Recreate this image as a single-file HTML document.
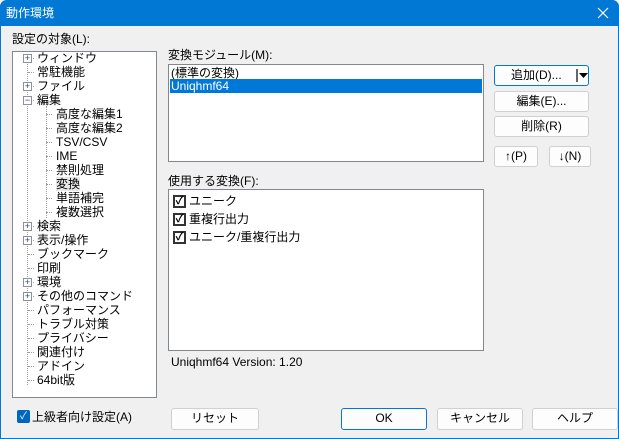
<!DOCTYPE html>
<html><head><meta charset="utf-8"><style>
*{margin:0;padding:0;box-sizing:border-box}
body{width:619px;height:439px;background:#f0f0f0;font-family:"Liberation Sans","Noto Sans CJK JP",sans-serif;font-size:12px;color:#000;position:relative;overflow:hidden}
.win{position:absolute;left:0;top:0;width:619px;height:439px;border:1px solid #0078d4;border-radius:7px 7px 0 0}
.title{position:absolute;left:0;top:0;width:619px;height:26px;background:#0078d4;color:#fff;font-size:12px;border-radius:7px 7px 0 0}
.a{position:absolute;white-space:nowrap;line-height:14px}
.box{position:absolute;background:#fff;border:1px solid #828790}
.btn{position:absolute;background:#fdfdfd;border:1px solid #d0d0d0;border-radius:3px;text-align:center;line-height:19px}
.exp{position:absolute;width:9px;height:9px;border:1px solid #919191;background:#fff;font-size:9px;line-height:7px;text-align:center;color:#1c3f94}
.dot{position:absolute;border-top:1px dotted #a0a0a0;width:6px;height:0}
.cb{position:absolute;width:13px;height:13px;border:2px solid #333;background:#fff;font-size:11px;line-height:9px;text-align:center;font-weight:bold}
</style></head><body>
<div class="win"></div>
<div class="title"><span class="a" style="left:6px;top:6px">動作環境</span><svg style="position:absolute;left:597px;top:7px" width="12" height="12"><path d="M1 1L11 11M11 1L1 11" stroke="#fff" stroke-width="1.2"/></svg></div>
<span class="a" style="left:12px;top:32px">設定の対象(L):</span>
<div class="box" style="left:12px;top:51px;width:145px;height:347px">
<div style="position:absolute;left:14px;top:6px;height:327px;border-left:1px dotted #a0a0a0"></div>
<div style="position:absolute;left:33px;top:54px;height:112px;border-left:1px dotted #a0a0a0"></div>
</div>
<div id="tree"></div>
<span class="a" style="left:168px;top:48px">変換モジュール(M):</span>
<div class="box" style="left:168px;top:64px;width:316px;height:98px">
<div class="a" style="left:2px;top:1px">(標準の変換)</div>
<div class="a" style="left:1px;top:14px;width:312px;height:14px;background:#0078d7;color:#fff;padding-left:1px">Uniqhmf64</div>
</div>
<span class="a" style="left:168px;top:174px">使用する変換(F):</span>
<div class="box" style="left:168px;top:189px;width:316px;height:162px">
<div class="cb" style="left:4px;top:5px">✓</div><span class="a" style="left:20px;top:4px">ユニーク</span>
<div class="cb" style="left:4px;top:23px">✓</div><span class="a" style="left:20px;top:22px">重複行出力</span>
<div class="cb" style="left:4px;top:41px">✓</div><span class="a" style="left:20px;top:40px">ユニーク/重複行出力</span>
</div>
<div class="btn" style="left:494px;top:65px;width:95px;height:21px;border-color:#0078d4;text-align:left;padding-left:16px">追加(D)...<span style="position:absolute;left:81px;top:3px;width:2px;height:13px;background:#666"></span><svg style="position:absolute;left:84px;top:7px" width="9" height="6"><path d="M0 0H9L4.5 5Z" fill="#000"/></svg></div>
<div class="btn" style="left:494px;top:91px;width:95px;height:21px">編集(E)...</div>
<div class="btn" style="left:494px;top:116px;width:95px;height:21px">削除(R)</div>
<div class="btn" style="left:494px;top:146px;width:44px;height:21px">↑(P)</div>
<div class="btn" style="left:549px;top:146px;width:42px;height:21px">↓(N)</div>
<span class="a" style="left:171px;top:355px">Uniqhmf64 Version: 1.20</span>
<div style="position:absolute;left:17px;top:410px;width:13px;height:13px;background:#0067c0;border-radius:2px;color:#fff;font-size:10px;line-height:13px;text-align:center">✓</div>
<span class="a" style="left:32px;top:410px">上級者向け設定(A)</span>
<div class="btn" style="left:171px;top:408px;width:88px;height:22px">リセット</div>
<div class="btn" style="left:341px;top:408px;width:86px;height:22px;border-color:#0078d4">OK</div>
<div class="btn" style="left:437px;top:408px;width:86px;height:22px">キャンセル</div>
<div class="btn" style="left:532px;top:408px;width:86px;height:22px">ヘルプ</div>
<script>
var rows=[["ウィンドウ",0,1],["常駐機能",0,0],["ファイル",0,1],["編集",0,2],["高度な編集1",1],["高度な編集2",1],["TSV/CSV",1],["IME",1],["禁則処理",1],["変換",1],["単語補完",1],["複数選択",1],["検索",0,1],["表示/操作",0,1],["ブックマーク",0,0],["印刷",0,0],["環境",0,1],["その他のコマンド",0,1],["パフォーマンス",0,0],["トラブル対策",0,0],["プライバシー",0,0],["関連付け",0,0],["アドイン",0,0],["64bit版",0,0]];
var h="";rows.forEach(function(r,i){var y=51+i*14;
if(r[1]){h+='<div class="dot" style="left:46px;top:'+(y+7)+'px"></div><span class="a" style="left:56px;top:'+y+'px;'+(r[0]=="変換"?'background:#e8e8e8;':'')+'">'+r[0]+'</span>';}
else{h+='<div class="dot" style="left:28px;top:'+(y+7)+'px"></div><span class="a" style="left:37px;top:'+y+'px">'+r[0]+'</span>';
if(r[2])h+='<div class="exp" style="left:23px;top:'+(y+3)+'px">'+(r[2]==1?'+':'−')+'</div>';}});
document.getElementById("tree").innerHTML=h;
</script>
</body></html>
